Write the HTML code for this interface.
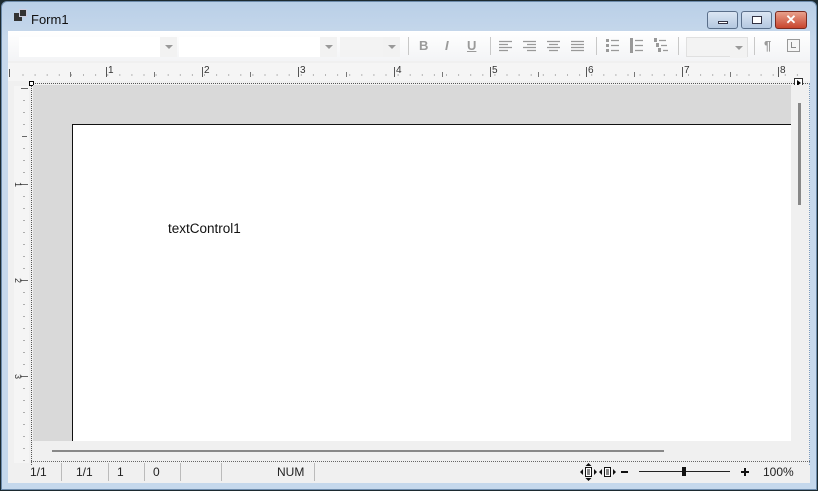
<!DOCTYPE html>
<html><head><style>
*{margin:0;padding:0;box-sizing:border-box}
body{width:818px;height:491px;background:#1c2a30;font-family:"Liberation Sans",sans-serif;position:relative;overflow:hidden}
.abs{position:absolute}
.frame{left:1px;top:1px;width:816px;height:489px;background:linear-gradient(#b9cfe7,#c8d9ec 40px,#c5d8ec);border-radius:6px 6px 0 0;border:1px solid #6d8bab}
.client{left:8px;top:31px;width:802px;height:452px;background:#f0f0f0}
.tb{left:0;top:0;width:802px;height:30px;background:linear-gradient(#ffffff,#f3f4f6);}
.combo{background:#fff;height:20px;top:6px}
.dd{position:absolute;right:0;top:0;width:17px;height:20px;background:#f2f2f2}
.dd:after{content:"";position:absolute;left:5px;top:8px;border-left:4px solid transparent;border-right:4px solid transparent;border-top:4px solid #999}
.sep{top:6px;width:1px;height:18px;background:#c8c8c8}
.ic{top:7px;font-size:13px;font-weight:bold;color:#9a9a9a}
.wbtn{top:11px;height:18px;border:1px solid #5a6f8a;border-radius:3px;background:linear-gradient(#dbe6f3,#b4c8e0)}
.sb span{position:absolute;top:3px;font-size:12px;color:#222}
.sb i{position:absolute;top:1px;width:1px;height:18px;background:#bbb}
</style></head><body>
<div class="abs frame"></div>
<div class="abs" style="left:14px;top:13px;width:8px;height:8px;background:#333"></div>
<div class="abs" style="left:19px;top:9px;width:8px;height:8px;background:#333;border:1px solid #ccd"></div>
<div class="abs" style="left:31px;top:12px;font-size:13px;color:#111">Form1</div>
<div class="abs wbtn" style="left:707px;width:31px"><div class="abs" style="left:10px;top:9px;width:10px;height:3px;background:#fff;border:1px solid #334"></div></div>
<div class="abs wbtn" style="left:741px;width:31px"><div class="abs" style="left:10px;top:4px;width:10px;height:8px;border:1px solid #334;background:#fff"></div></div>
<div class="abs wbtn" style="left:775px;width:32px;background:linear-gradient(#e8a08c,#c8452d);border-color:#7a2a20;color:#fff;font-size:13px;font-weight:bold;text-align:center;line-height:16px">✕</div>
<div class="abs client">
 <div class="abs tb">
  <div class="abs combo" style="left:11px;width:158px"><div class="dd"></div></div>
  <div class="abs combo" style="left:171px;width:158px"><div class="dd"></div></div>
  <div class="abs combo" style="left:332px;width:60px;background:#f3f3f3"><div class="dd"></div></div>
  <div class="abs sep" style="left:400px"></div>
  <div class="abs ic" style="left:411px">B</div>
  <div class="abs ic" style="left:437px;font-style:italic">I</div>
  <div class="abs ic" style="left:459px;text-decoration:underline">U</div>
  <div class="abs sep" style="left:482px"></div>
  <svg class="abs" style="left:490px;top:8px" width="90" height="14" stroke="#999" stroke-width="1.2">
   <path d="M1 2.5h13M1 5.5h9M1 8.5h13M1 11.5h9"/>
   <path d="M25 2.5h13M29 5.5h9M25 8.5h13M29 11.5h9"/>
   <path d="M49 2.5h13M51 5.5h9M49 8.5h13M51 11.5h9"/>
   <path d="M73 2.5h13M73 5.5h13M73 8.5h13M73 11.5h13"/>
  </svg>
  <div class="abs sep" style="left:588px"></div>
  <svg class="abs" style="left:597px;top:7px" width="70" height="16" fill="#999" stroke="#999" stroke-width="1.2">
   <rect x="1" y="1" width="3" height="3" stroke="none"/><rect x="1" y="6" width="3" height="3" stroke="none"/><rect x="1" y="11" width="3" height="3" stroke="none"/>
   <path d="M6 2.5h8M6 7.5h8M6 12.5h8"/>
   <rect x="25" y="0" width="3" height="15" stroke="none"/><path d="M30 2.5h8M30 7.5h8M30 12.5h8"/>
   <rect x="49" y="0" width="3" height="4" stroke="none"/><rect x="51" y="5" width="3" height="4" stroke="none"/><rect x="53" y="10" width="3" height="4" stroke="none"/>
   <path d="M54 2.5h7M56 7.5h6M58 12.5h5"/>
  </svg>
  <div class="abs sep" style="left:670px"></div>
  <div class="abs combo" style="left:678px;width:62px;background:#f3f3f3;border:1px solid #e0e0e0"><div class="dd"></div></div>
  <div class="abs sep" style="left:746px"></div>
  <div class="abs ic" style="left:756px">¶</div>
  <div class="abs" style="left:779px;top:8px;width:13px;height:13px;border:1px solid #999;background:#f6f6f6"><div class="abs" style="left:3px;top:2px;width:5px;height:6px;border-left:1px solid #888;border-bottom:1px solid #888"></div></div>
 </div>
 <div class="abs" style="left:0;top:32px;width:802px;height:18px;background:#f5f5f5">
  <svg width="802" height="18" class="abs" style="left:0;top:0">
   <g stroke="#555" stroke-width="1">
    <line x1="1.5" y1="6" x2="1.5" y2="14"/>
   </g>
   <g font-size="10" fill="#333" font-family="Liberation Sans">
    <text x="100" y="10">1</text><text x="196" y="10">2</text><text x="292" y="10">3</text><text x="388" y="10">4</text><text x="484" y="10">5</text><text x="580" y="10">6</text><text x="676" y="10">7</text><text x="772" y="10">8</text>
   </g>
   <g stroke="#555">
    <line x1="98.5" y1="4" x2="98.5" y2="14"/><line x1="194.5" y1="4" x2="194.5" y2="14"/><line x1="290.5" y1="4" x2="290.5" y2="14"/><line x1="386.5" y1="4" x2="386.5" y2="14"/><line x1="482.5" y1="4" x2="482.5" y2="14"/><line x1="578.5" y1="4" x2="578.5" y2="14"/><line x1="674.5" y1="4" x2="674.5" y2="14"/><line x1="770.5" y1="4" x2="770.5" y2="14"/>
   </g>
   <g stroke="#777">
    <line x1="14.5" y1="12" x2="800" y2="12" stroke-dasharray="1 11.1"/>
   </g>
   <g stroke="#777">
    <line x1="62.5" y1="9" x2="62.5" y2="14"/><line x1="146.5" y1="9" x2="146.5" y2="14"/><line x1="242.5" y1="9" x2="242.5" y2="14"/><line x1="338.5" y1="9" x2="338.5" y2="14"/><line x1="434.5" y1="9" x2="434.5" y2="14"/><line x1="530.5" y1="9" x2="530.5" y2="14"/><line x1="626.5" y1="9" x2="626.5" y2="14"/><line x1="722.5" y1="9" x2="722.5" y2="14"/>
   </g>
  </svg>
 </div>
 <div class="abs" style="left:6px;top:55px;width:15px;height:377px;background:#f5f5f5">
  <svg width="15" height="377" class="abs">
   <line x1="10" y1="14" x2="10" y2="377" stroke="#666" stroke-dasharray="1 11"/>
   <line x1="7" y1="2.5" x2="14" y2="2.5" stroke="#666"/>
   <line x1="8" y1="50.5" x2="13" y2="50.5" stroke="#666"/>
   <line x1="6" y1="98.5" x2="14" y2="98.5" stroke="#666"/>
   <line x1="6" y1="194.5" x2="14" y2="194.5" stroke="#666"/>
   <line x1="6" y1="290.5" x2="14" y2="290.5" stroke="#666"/>
   <g font-size="9" fill="#333" font-family="Liberation Sans"><text transform="translate(1,96) rotate(90)">1</text><text transform="translate(1,192) rotate(90)">2</text><text transform="translate(1,288) rotate(90)">3</text></g>
  </svg>
 </div>
 <div class="abs" style="left:23px;top:52px;width:779px;height:382px;border-top:1px dotted #555;border-left:1px dotted #555;border-right:1px dotted #7a9bc0"></div>
 <div class="abs" style="left:21px;top:50px;width:5px;height:5px;border:1px solid #000;background:#fff"></div>
 <div class="abs" style="left:786px;top:47px;width:9px;height:9px;border:1px solid #333;background:#fff"><div class="abs" style="left:2px;top:1px;border-left:4px solid #000;border-top:3px solid transparent;border-bottom:3px solid transparent"></div></div>
 <div class="abs" style="left:25px;top:54px;width:758px;height:356px;background:#d9d9d9"></div>
 <div class="abs" style="left:64px;top:93px;width:719px;height:317px;background:#fff;border-left:1px solid #111;border-top:1px solid #111"></div>
 <div class="abs" style="left:160px;top:190px;font-size:13.5px;color:#111">textControl1</div>
 <div class="abs" style="left:783px;top:54px;width:17px;height:356px;background:#f0f0f0"><div class="abs" style="left:7px;top:18px;width:3px;height:102px;background:#888"></div></div>
 <div class="abs" style="left:25px;top:410px;width:758px;height:19px;background:#f0f0f0"><div class="abs" style="left:19px;top:9px;width:612px;height:2px;background:#888"></div></div>
 <div class="abs" style="left:23px;top:430px;width:779px;border-top:1px dotted #666"></div>
 <div class="abs sb" style="left:0;top:431px;width:802px;height:21px">
  <span style="left:22px">1/1</span><i style="left:53px"></i>
  <span style="left:68px">1/1</span><i style="left:100px"></i>
  <span style="left:109px">1</span><i style="left:136px"></i>
  <span style="left:145px">0</span><i style="left:172px"></i>
  <i style="left:213px"></i>
  <span style="left:269px">NUM</span><i style="left:306px"></i>
  <svg class="abs" style="left:571px;top:1px" width="40" height="18" fill="#111" stroke="#111">
   <rect x="6.5" y="4.5" width="6" height="9" fill="#fff"/><path d="M8 7h3M8 9h3M8 11h3" />
   <path d="M1 9l3-3v6zM18 9l-3-3v6zM9.5 0l-3 3h6zM9.5 18l-3-3h6z" stroke="none"/>
   <rect x="25.5" y="4.5" width="6" height="9" fill="#fff"/><path d="M27 7h3M27 9h3M27 11h3"/>
   <path d="M20 9l3-3v6zM37 9l-3-3v6z" stroke="none"/>
  </svg>
  <div class="abs" style="left:613px;top:9px;width:7px;height:2px;background:#111"></div>
  <div class="abs" style="left:631px;top:9px;width:91px;height:1px;background:#222"></div>
  <div class="abs" style="left:674px;top:5px;width:4px;height:9px;background:#111"></div>
  <div class="abs" style="left:733px;top:9px;width:8px;height:2px;background:#111"></div>
  <div class="abs" style="left:736px;top:6px;width:2px;height:8px;background:#111"></div>
  <span style="left:755px">100%</span>
 </div>
</div>
</body></html>
